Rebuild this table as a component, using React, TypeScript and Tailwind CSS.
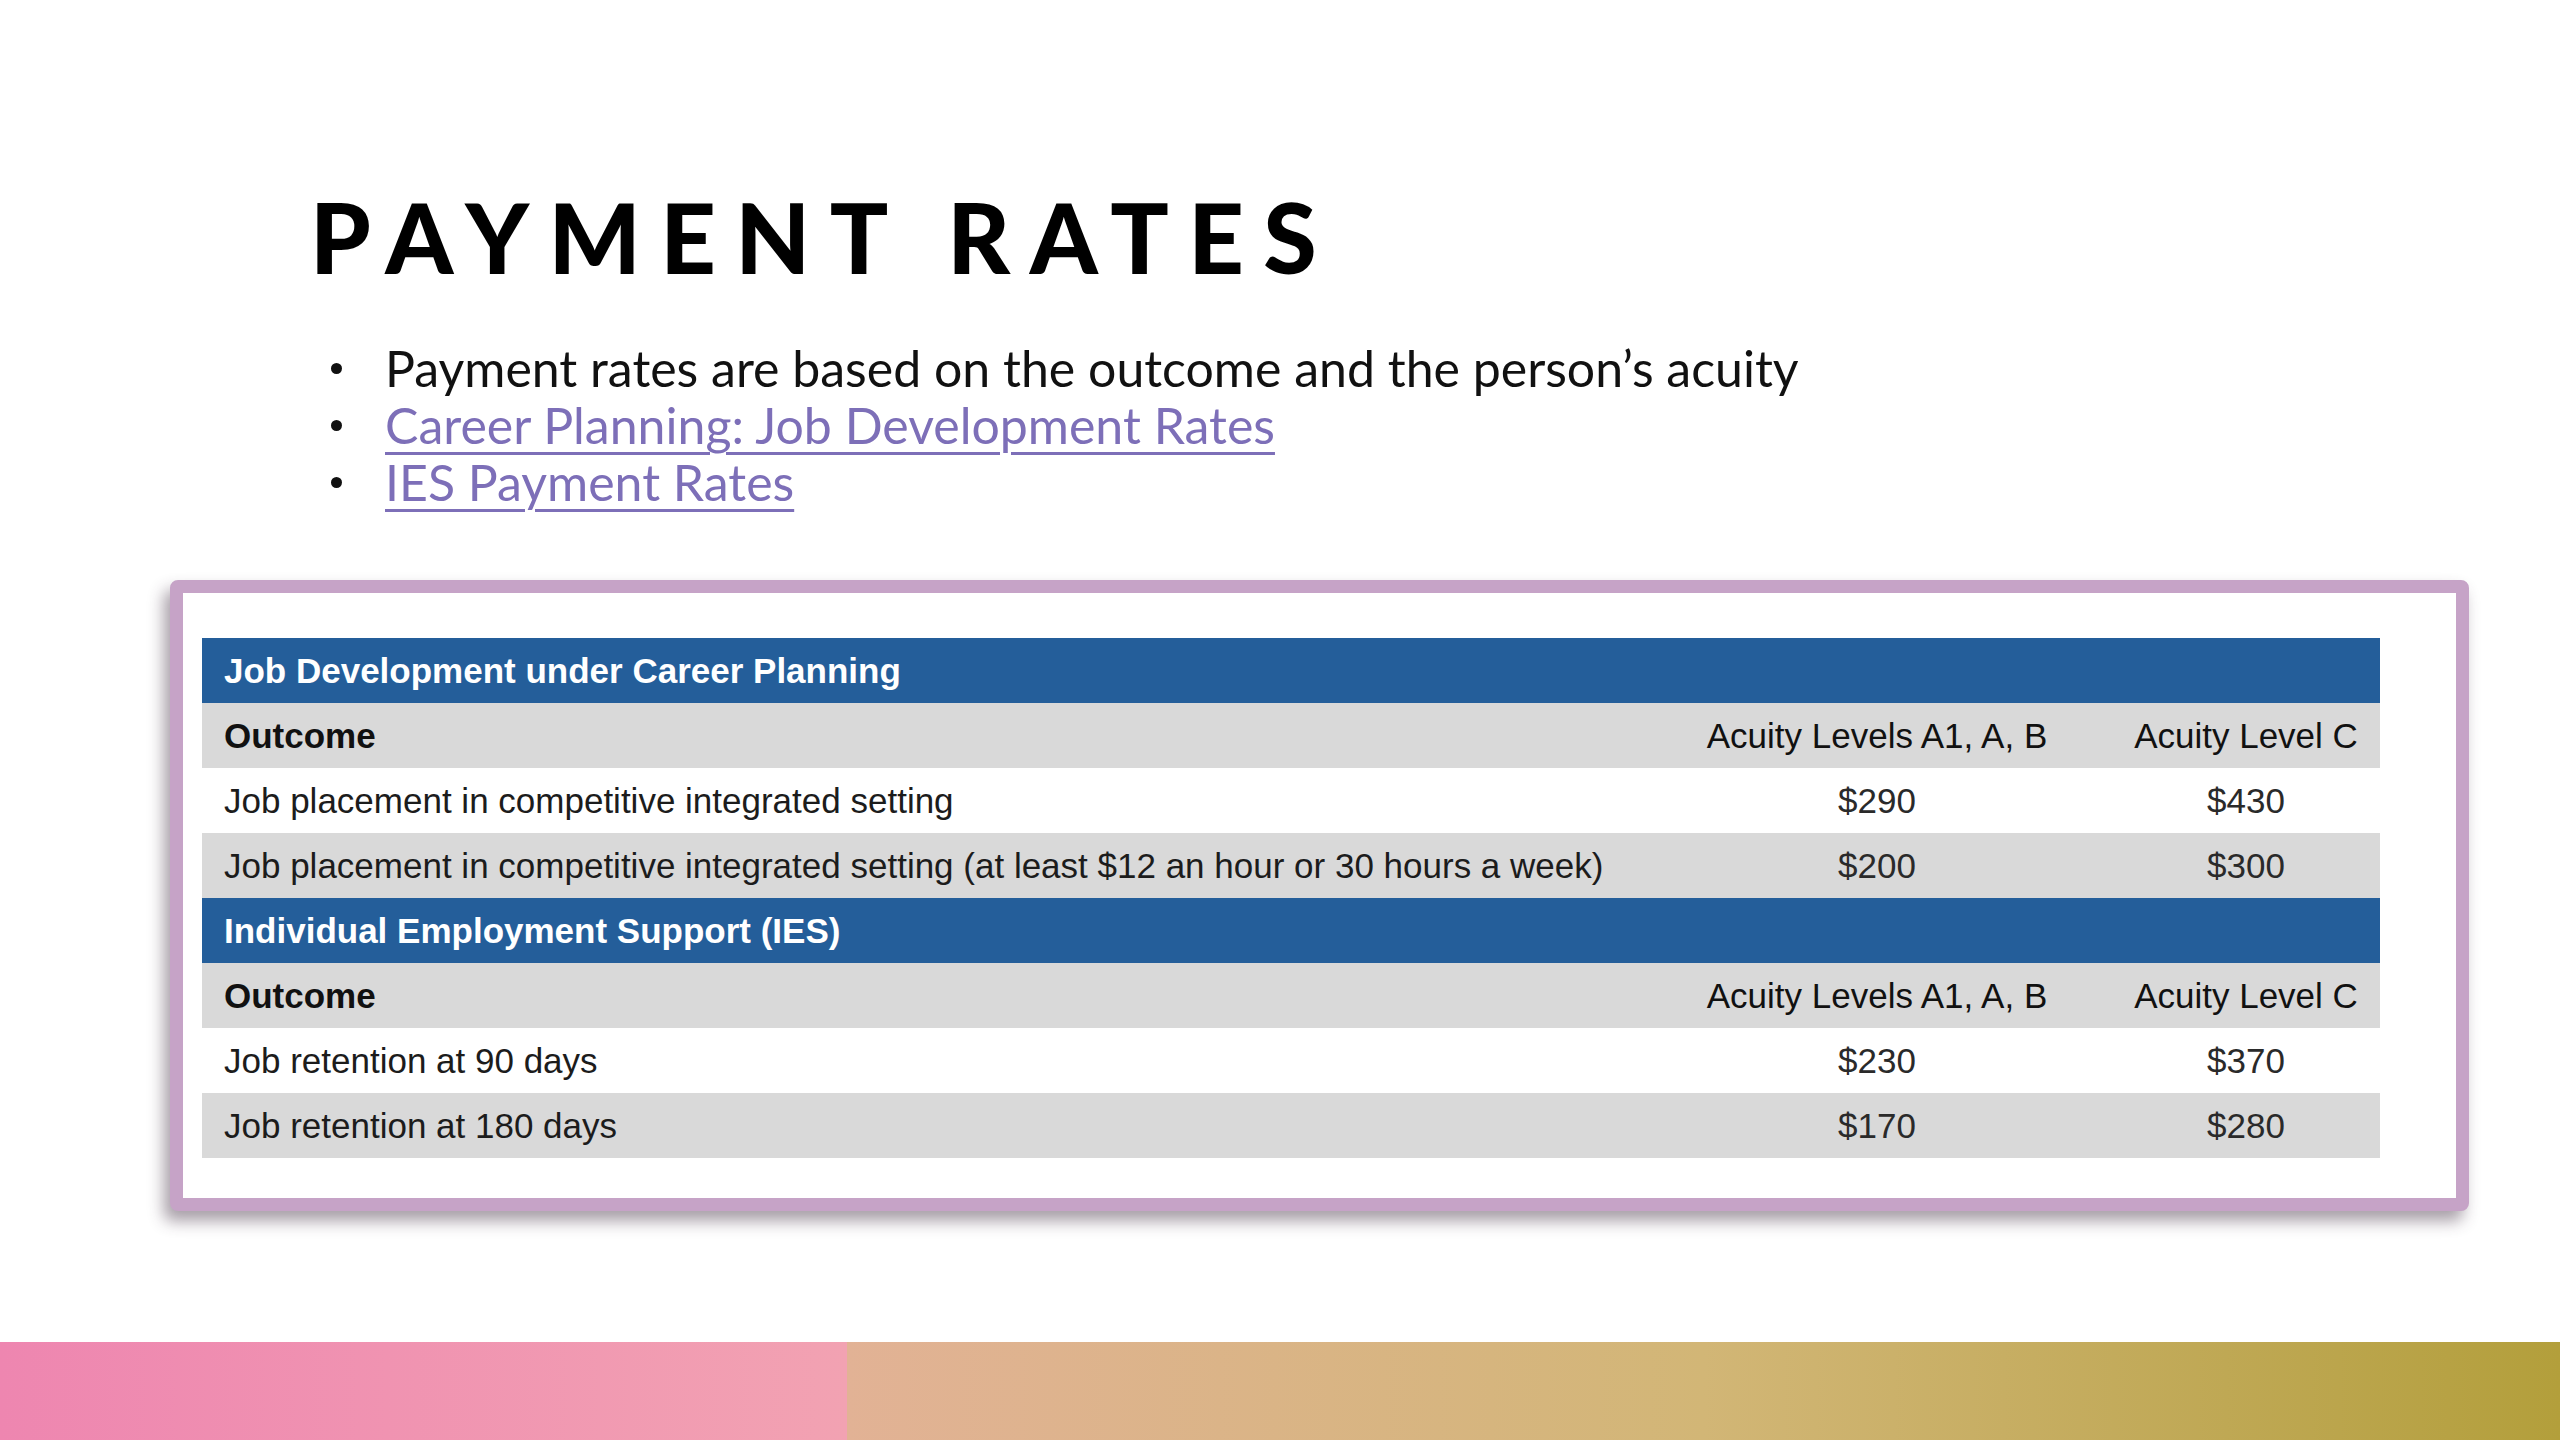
import React from "react";

const rowH = "h-[65px]";

function BlueRow({ children }: { children: React.ReactNode }) {
  return (
    <div className={`${rowH} bg-[#245e9a] flex items-center pl-[22px] text-white font-bold`}>
      {children}
    </div>
  );
}

function HeadRow() {
  return (
    <div className={`${rowH} bg-[#d9d9d9] grid grid-cols-[1440px_470px_268px] items-center text-[#111]`}>
      <div className="pl-[22px] font-bold">Outcome</div>
      <div className="text-center">Acuity Levels A1, A, B</div>
      <div className="text-center">Acuity Level C</div>
    </div>
  );
}

function DataRow({ label, a, c, gray }: { label: string; a: string; c: string; gray?: boolean }) {
  return (
    <div
      className={`${rowH} ${gray ? "bg-[#d9d9d9]" : "bg-white"} grid grid-cols-[1440px_470px_268px] items-center text-[#1c1c1c]`}
    >
      <div className="pl-[22px] whitespace-nowrap">{label}</div>
      <div className="text-center text-[#2a2a2a]">{a}</div>
      <div className="text-center text-[#2a2a2a]">{c}</div>
    </div>
  );
}

function Bullet() {
  return (
    <span className="w-[52px] shrink-0 flex items-center">
      <span className="block w-[11px] h-[11px] rounded-full bg-[#111] -ml-[2px]" />
    </span>
  );
}

export default function App() {
  return (
    <div className="w-[2560px] h-[1440px] bg-white flex flex-col overflow-hidden">
      <div className="pl-[310px] pt-[188px]">
        <h1
          className="text-[97px] leading-none font-black tracking-[0.2em] text-black"
          style={{ fontFamily: "Lato, 'Noto Sans', sans-serif" }}
        >
          PAYMENT RATES
        </h1>
      </div>

      <ul
        className="mt-[55px] pl-[333px] text-[50px] leading-[57px] text-[#111]"
        style={{ fontFamily: "Lato, 'Noto Sans', sans-serif" }}
      >
        <li className="flex">
          <Bullet />
          <span>Payment rates are based on the outcome and the person’s acuity</span>
        </li>
        <li className="flex">
          <Bullet />
          <span className="text-[#7d6fb8] underline decoration-[3px] underline-offset-[8px]">
            Career Planning: Job Development Rates
          </span>
        </li>
        <li className="flex">
          <Bullet />
          <span className="text-[#7d6fb8] underline decoration-[3px] underline-offset-[8px]">
            IES Payment Rates
          </span>
        </li>
      </ul>

      <div className="mt-[69px] ml-[170px] w-[2299px]">
        <div className="rounded-[8px] border-[13px] border-[#c6a3c7] bg-white pt-[45px] pb-[40px] pl-[19px] pr-[77px] shadow-[-6px_10px_16px_rgba(60,40,60,0.45)]">
          <div
            className="w-[2178px] text-[35px] leading-none"
            style={{ fontFamily: "'Liberation Sans', Arial, sans-serif" }}
          >
            <BlueRow>Job Development under Career Planning</BlueRow>
            <HeadRow />
            <DataRow label="Job placement in competitive integrated setting" a="$290" c="$430" />
            <DataRow
              label="Job placement in competitive integrated setting (at least $12 an hour or 30 hours a week)"
              a="$200"
              c="$300"
              gray
            />
            <BlueRow>Individual Employment Support (IES)</BlueRow>
            <HeadRow />
            <DataRow label="Job retention at 90 days" a="$230" c="$370" />
            <DataRow label="Job retention at 180 days" a="$170" c="$280" gray />
          </div>
        </div>
      </div>

      <div className="mt-auto h-[98px] flex">
        <div className="w-[847px] bg-gradient-to-r from-[#ee86b0] to-[#f2a2b2]" />
        <div className="flex-1 bg-gradient-to-r from-[#e2b295] via-[#d2b676] to-[#b39f3b]" />
      </div>
    </div>
  );
}
